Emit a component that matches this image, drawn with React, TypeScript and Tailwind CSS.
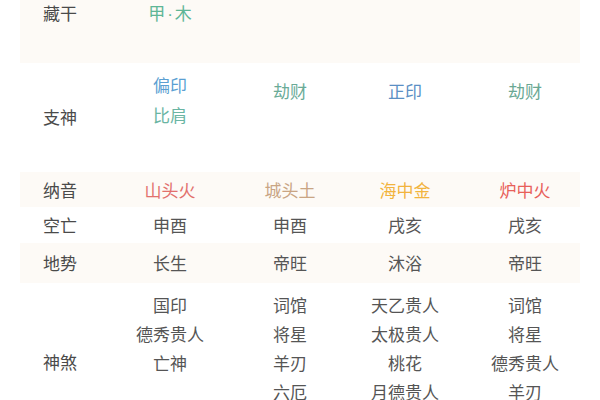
const font = { fontFamily: '"Noto Sans CJK SC", "Noto Sans", sans-serif' }

const cols = "grid grid-cols-[80px_140px_100px_130px_110px]"

export default function App() {
  return (
    <div className="w-[600px] h-[400px] overflow-hidden bg-white text-[17px] text-[#555]" style={font}>
      <div className="mx-[20px] w-[560px]">
        {/* 藏干 */}
        <div className={`${cols} h-[63px] bg-[#fdfaf6] leading-[20px] text-center`}>
          <div className="pt-[3px] text-[#4a4a4a]">藏干</div>
          <div className="pt-[3px] text-[#5fb696]">
            甲<span className="font-['Liberation_Sans'] px-[2px]">·</span>木
          </div>
          <div />
          <div />
          <div />
        </div>

        {/* 支神 */}
        <div className={`${cols} h-[109px] bg-white leading-[30px] text-center`}>
          <div className="pt-[39px] text-[#4a4a4a]">支神</div>
          <div className="pt-[7px]">
            <div className="text-[#5b9fd2]">偏印</div>
            <div className="text-[#6ab5a3]">比肩</div>
          </div>
          <div className="pt-[13px] text-[#6aab97]">劫财</div>
          <div className="pt-[13px] text-[#5b8fc4]">正印</div>
          <div className="pt-[13px] text-[#6aa893]">劫财</div>
        </div>

        {/* 纳音 */}
        <div className={`${cols} h-[35px] items-center bg-[#fdfaf6] text-center`}>
          <div className="text-[#4a4a4a]">纳音</div>
          <div className="text-[#e2706d]">山头火</div>
          <div className="text-[#c9a584]">城头土</div>
          <div className="text-[#f2b43e]">海中金</div>
          <div className="text-[#e8605a]">炉中火</div>
        </div>

        {/* 空亡 */}
        <div className={`${cols} h-[36px] items-center bg-white text-center`}>
          <div className="text-[#4a4a4a]">空亡</div>
          <div>申酉</div>
          <div>申酉</div>
          <div>戌亥</div>
          <div>戌亥</div>
        </div>

        {/* 地势 */}
        <div className={`${cols} h-[40px] items-center bg-[#fdfaf6] text-center`}>
          <div className="text-[#4a4a4a]">地势</div>
          <div>长生</div>
          <div>帝旺</div>
          <div>沐浴</div>
          <div>帝旺</div>
        </div>

        {/* 神煞 */}
        <div className={`${cols} bg-white leading-[29px] text-center`}>
          <div className="pt-[64px] text-[#4a4a4a]">神煞</div>
          <div className="pt-[7px]">
            <div>国印</div>
            <div>德秀贵人</div>
            <div>亡神</div>
          </div>
          <div className="pt-[7px]">
            <div>词馆</div>
            <div>将星</div>
            <div>羊刃</div>
            <div>六厄</div>
          </div>
          <div className="pt-[7px]">
            <div>天乙贵人</div>
            <div>太极贵人</div>
            <div>桃花</div>
            <div>月德贵人</div>
          </div>
          <div className="pt-[7px]">
            <div>词馆</div>
            <div>将星</div>
            <div>德秀贵人</div>
            <div>羊刃</div>
          </div>
        </div>
      </div>
    </div>
  )
}
